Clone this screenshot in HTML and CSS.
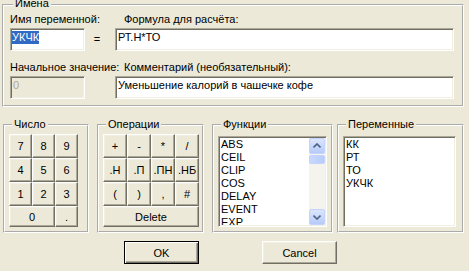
FILE: index.html
```html
<!DOCTYPE html>
<html lang="ru">
<head>
  <meta charset="UTF-8">
  <title>Переменная</title>
  <link rel="stylesheet" href="styles.css">
</head>
<body>
  <fieldset class="group names">
    <legend>Имена</legend>
    <div class="names-grid">
      <label class="caption wide">Имя переменной:</label>
      <label class="caption indent">Формула для расчёта:</label>
      <div class="field"><span class="selected">УКЧК</span></div>
      <span class="equals">=</span>
      <div class="field">РТ.Н*ТО</div>
      <label class="caption wide low">Начальное значение:</label>
      <label class="caption indent low">Комментарий (необязательный):</label>
      <div class="field disabled">0</div>
      <span></span>
      <div class="field">Уменьшение калорий в чашечке кофе</div>
    </div>
  </fieldset>

  <div class="panels">
    <fieldset class="group number">
      <legend>Число</legend>
      <div class="keys keys-3">
        <button class="btn">7</button>
        <button class="btn">8</button>
        <button class="btn">9</button>
        <button class="btn">4</button>
        <button class="btn">5</button>
        <button class="btn">6</button>
        <button class="btn">1</button>
        <button class="btn">2</button>
        <button class="btn">3</button>
        <button class="btn span-2">0</button>
        <button class="btn">.</button>
      </div>
    </fieldset>

    <fieldset class="group ops">
      <legend>Операции</legend>
      <div class="keys keys-4">
        <button class="btn">+</button>
        <button class="btn">-</button>
        <button class="btn">*</button>
        <button class="btn">/</button>
        <button class="btn">.Н</button>
        <button class="btn">.П</button>
        <button class="btn">.ПН</button>
        <button class="btn">.НБ</button>
        <button class="btn">(</button>
        <button class="btn">)</button>
        <button class="btn">,</button>
        <button class="btn">#</button>
        <button class="btn span-4">Delete</button>
      </div>
    </fieldset>

    <fieldset class="group funcs">
      <legend>Функции</legend>
      <div class="listbox">
        <div class="items">
          <div>ABS</div>
          <div>CEIL</div>
          <div>CLIP</div>
          <div>COS</div>
          <div>DELAY</div>
          <div>EVENT</div>
          <div>EXP</div>
        </div>
        <div class="scrollbar">
          <div class="sb-btn">
            <svg width="8" height="6" viewBox="0 0 8 6"><path d="M0.5 4.5 L4 1 L7.5 4.5" fill="none" stroke="#4d6185" stroke-width="1.6"/></svg>
          </div>
          <div class="sb-thumb"></div>
          <div class="sb-track"></div>
          <div class="sb-btn">
            <svg width="8" height="6" viewBox="0 0 8 6"><path d="M0.5 1.5 L4 5 L7.5 1.5" fill="none" stroke="#4d6185" stroke-width="1.6"/></svg>
          </div>
        </div>
      </div>
    </fieldset>

    <fieldset class="group vars">
      <legend>Переменные</legend>
      <div class="listbox">
        <div class="items">
          <div>КК</div>
          <div>РТ</div>
          <div>ТО</div>
          <div>УКЧК</div>
        </div>
      </div>
    </fieldset>
  </div>

  <div class="actions">
    <button class="btn default">OK</button>
    <button class="btn">Cancel</button>
  </div>
</body>
</html>
```

FILE: styles.css
```css
body {
  margin: 0;
  width: 469px;
  height: 271px;
  background-color: #ece9d8;
  color: #000000;
  font-family: "Liberation Sans", Arial, sans-serif;
  font-size: 11px;
  overflow: hidden;
}

.group {
  margin: 0;
  padding: 0;
  border: 2px groove #ffffff;
  min-width: 0;
  box-sizing: border-box;
}

.group legend {
  margin-left: 3px;
  padding: 0 2px;
  line-height: 13px;
}

.names {
  margin-top: -3px;
  margin-left: 2px;
  width: 462px;
  padding: 0 0 6px 6px;
}

.names legend {
  padding-bottom: 3px;
}

.names-grid {
  display: grid;
  grid-template-columns: 75px 30px 339px;
  grid-template-rows: 15px 23px 25px 23px;
}

.caption {
  line-height: 13px;
  white-space: nowrap;
}

.caption.wide {
  grid-column: span 2;
}

.caption.indent {
  padding-left: 9px;
}

.caption.low {
  margin-top: 10px;
}

.equals {
  text-align: center;
  line-height: 23px;
  padding-right: 6px;
}

.field {
  box-sizing: border-box;
  height: 23px;
  border: 1px solid;
  border-color: #aca899 #ffffff #ffffff #aca899;
  box-shadow: inset 1px 1px 0 #716f64, inset -1px -1px 0 #f1efe2;
  background-color: #ffffff;
  padding: 2px 2px 0;
  line-height: 13px;
  white-space: nowrap;
}

.field.disabled {
  background-color: #ece9d8;
  color: #aca899;
}

.selected {
  display: inline-block;
  margin-left: -1px;
  background-color: #316ac5;
  color: #ffffff;
}

.panels {
  display: flex;
  align-items: stretch;
  margin-top: 11px;
}

.number {
  margin-left: 3px;
  width: 86px;
  padding: 3px 4px 4px;
}

.ops {
  margin-left: 8px;
  width: 107px;
  padding: 3px 4px 4px;
}

.funcs {
  margin-left: 8px;
  width: 121px;
  padding: 5px 4px 3px;
}

.vars {
  margin-left: 4px;
  width: 127px;
  padding: 5px 4px 3px;
}

.keys {
  display: grid;
  grid-template-rows: 24px 24px 24px 21px;
}

.keys-3 {
  grid-template-columns: repeat(3, 23px);
}

.keys-4 {
  grid-template-columns: repeat(4, 24px);
}

.span-2 {
  grid-column: span 2;
}

.span-4 {
  grid-column: span 4;
}

.btn {
  font: inherit;
  color: #000000;
  background-color: #ece9d8;
  border: 1px solid;
  border-color: #ffffff #716f64 #716f64 #ffffff;
  box-shadow: inset -1px -1px 0 #aca899, inset 1px 1px 0 #f1efe2;
  padding: 0;
  margin: 0;
  box-sizing: border-box;
}

.listbox {
  display: flex;
  box-sizing: border-box;
  height: 91px;
  border: 1px solid;
  border-color: #aca899 #ffffff #ffffff #aca899;
  box-shadow: inset 1px 1px 0 #716f64, inset -1px -1px 0 #f1efe2;
  background-color: #ffffff;
  padding: 1px;
  overflow: hidden;
}

.funcs .listbox {
  width: 109px;
}

.vars .listbox {
  width: 113px;
}

.items {
  flex: 1;
  padding-left: 1px;
  line-height: 13px;
  overflow: hidden;
}

.scrollbar {
  width: 16px;
  display: flex;
  flex-direction: column;
  background-color: #f4f3ee;
}

.sb-btn {
  height: 16px;
  box-sizing: border-box;
  border: 1px solid #c3d3fd;
  border-radius: 2px;
  background: linear-gradient(#dbe5fd, #b7cbf8);
  display: flex;
  align-items: center;
  justify-content: center;
}

.sb-thumb {
  height: 9px;
  margin-top: 1px;
  box-sizing: border-box;
  border: 1px solid #c3d3fd;
  border-radius: 2px;
  background: linear-gradient(90deg, #c9d8fc, #b9ccf7);
}

.sb-track {
  flex: 1;
}

.actions {
  display: flex;
  gap: 63px;
  margin-top: 8px;
  padding-left: 124px;
}

.actions .btn {
  width: 75px;
  height: 23px;
}

.actions .default {
  border: 1px solid #000000;
  box-shadow: inset 1px 1px 0 #ffffff, inset -1px -1px 0 #716f64, inset -2px -2px 0 #aca899;
}
```
